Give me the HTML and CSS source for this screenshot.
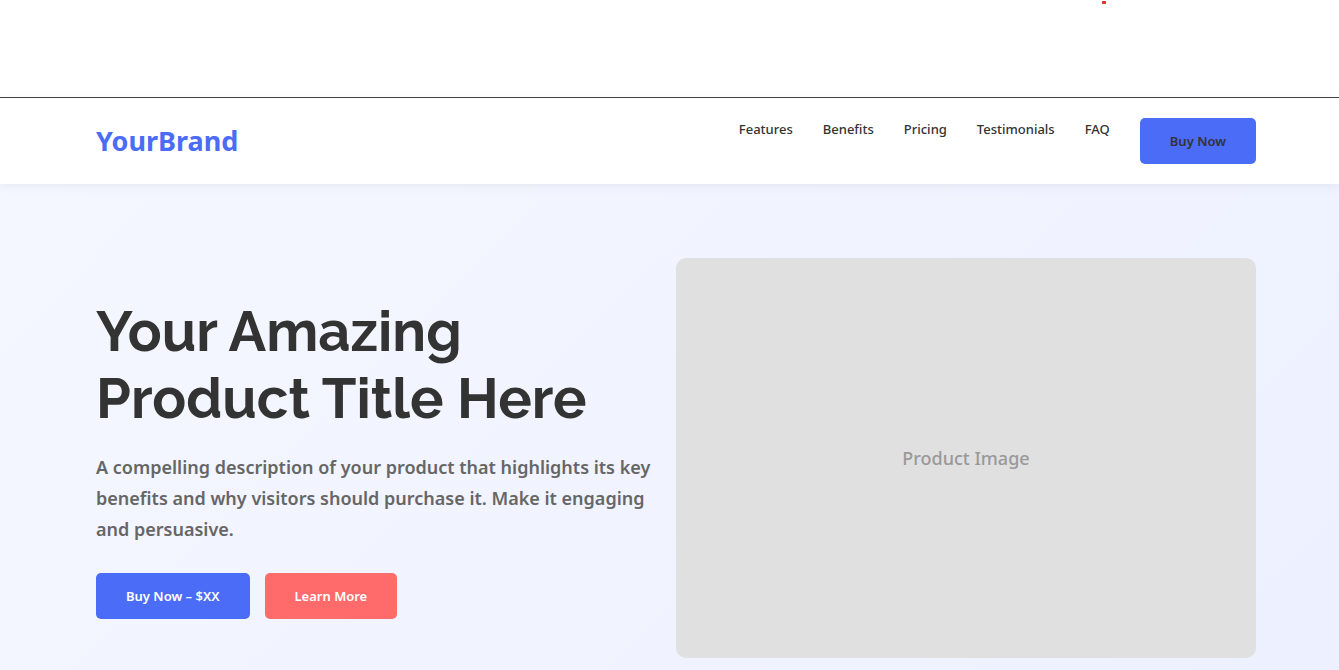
FILE: index.html
```
<!DOCTYPE html>
<html lang="en">
<head>
    <meta charset="UTF-8">
    <meta name="viewport" content="width=device-width, initial-scale=1.0">
    <title>YourBrand</title>
    <link rel="stylesheet" href="styles.css">
</head>
<body>
    <div class="topbar">
        <span class="marker"></span>
    </div>

    <div class="page">
        <!-- Header -->
        <header class="header">
            <div class="container header-content">
                <a href="#" class="logo">YourBrand</a>
                <nav>
                    <ul class="nav-links">
                        <li><a href="#features">Features</a></li>
                        <li><a href="#benefits">Benefits</a></li>
                        <li><a href="#pricing">Pricing</a></li>
                        <li><a href="#testimonials">Testimonials</a></li>
                        <li><a href="#faq">FAQ</a></li>
                        <li><a href="#buy" class="btn btn-nav">Buy Now</a></li>
                    </ul>
                </nav>
            </div>
        </header>

        <!-- Hero Section -->
        <section class="hero">
            <div class="container hero-content">
                <div class="hero-text">
                    <h1>Your Amazing Product Title Here</h1>
                    <p>A compelling description of your product that highlights its key benefits and why visitors should purchase it. Make it engaging and persuasive.</p>
                    <div class="hero-buttons">
                        <a href="#buy" class="btn">Buy Now – $XX</a>
                        <a href="#features" class="btn btn-secondary">Learn More</a>
                    </div>
                </div>
                <div class="hero-image">Product Image</div>
            </div>
        </section>
    </div>
</body>
</html>
```

FILE: styles.css
```
* {
    margin: 0;
    padding: 0;
    box-sizing: border-box;
}
body {
    font-family: "Segoe UI", "Noto Sans", sans-serif;
    font-size: 13px;
    font-weight: 600;
    line-height: 22px;
    color: #333;
    background: #fff;
}
a {
    color: inherit;
    text-decoration: none;
}
.container {
    padding: 0 83px 0 96px;
}

/* Top strip */
.topbar {
    position: relative;
    height: 98px;
    border-bottom: 1px solid #444;
}
.marker {
    position: absolute;
    top: 1px;
    right: 233px;
    width: 4px;
    height: 3px;
    border-radius: 1px;
    background: #e02b20;
}

/* Header */
.page {
    background: linear-gradient(135deg, #f5f7ff 0%, #edf0ff 100%);
}
.header {
    padding: 20px 0;
    background: rgba(255, 255, 255, 0.95);
    box-shadow: 0 2px 10px rgba(0, 0, 0, 0.06);
}
.header-content {
    display: flex;
    justify-content: space-between;
    align-items: center;
}
.logo {
    font-size: 27px;
    font-weight: 700;
    line-height: 46px;
    color: #4a6cf7;
}
.nav-links {
    display: flex;
    align-items: flex-start;
    gap: 30px;
    font-weight: 500;
    list-style: none;
}

/* Buttons */
.btn {
    display: block;
    padding: 12px 30px;
    border-radius: 5px;
    background: #4a6cf7;
    font-weight: 600;
    color: #fff;
}
.btn-nav {
    color: #333;
}
.btn-secondary {
    background: #ff6b6b;
}

/* Hero */
.hero {
    padding: 74px 0 12px;
}
.hero-content {
    display: grid;
    grid-template-columns: 1fr 1fr;
    align-items: center;
}
.hero-text {
    padding-right: 20px;
}
.hero-text h1 {
    margin-bottom: 20px;
    font-family: "Raleway", sans-serif;
    font-size: 56px;
    font-weight: 700;
    line-height: 67px;
}
.hero-text p {
    margin-bottom: 28px;
    font-size: 18px;
    line-height: 31px;
    color: #666;
}
.hero-buttons {
    display: flex;
    gap: 15px;
}
.hero-image {
    display: flex;
    justify-content: center;
    align-items: center;
    height: 400px;
    border-radius: 10px;
    background: #e0e0e0;
    font-size: 18px;
    font-weight: 500;
    color: #999;
}
```
